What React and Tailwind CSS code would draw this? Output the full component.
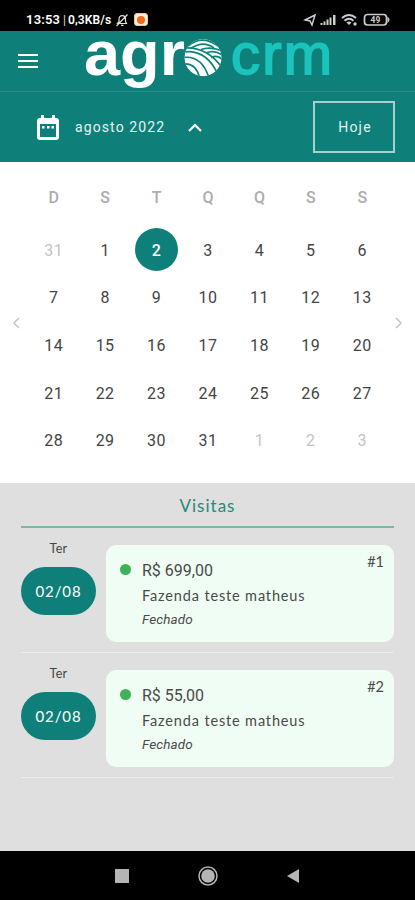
const weekDays = ['D', 'S', 'T', 'Q', 'Q', 'S', 'S'];

const weeks = [
    [31, 1, 2, 3, 4, 5, 6],
    [7, 8, 9, 10, 11, 12, 13],
    [14, 15, 16, 17, 18, 19, 20],
    [21, 22, 23, 24, 25, 26, 27],
    [28, 29, 30, 31, 1, 2, 3],
];

const visits = [
    { id: 1, weekDay: 'Ter', date: '02/08', value: 'R$ 699,00', farm: 'Fazenda teste matheus', status: 'Fechado' },
    { id: 2, weekDay: 'Ter', date: '02/08', value: 'R$ 55,00', farm: 'Fazenda teste matheus', status: 'Fechado' },
];

const StatusBar = () => (
    <div className="flex h-[31px] items-center bg-black pt-[8px] pl-[26px] pr-[24px] text-white">
        <div className="flex w-[86px] items-center whitespace-nowrap font-[Roboto,sans-serif] leading-[16px] font-semibold">
            <span className="w-[37px] text-[13px] tracking-[0.200px]">13:53</span>
            <span className="w-[5px] text-[12px] font-normal text-[#ddd]">|</span>
            <span className="text-[12px] tracking-[0.100px]">0,3KB/s</span>
        </div>
        <svg className="ml-[3px] h-[14px] w-[14px]" viewBox="0 0 14 14" fill="none" stroke="#dedede" strokeWidth="1.2">
            <path d="M2.500 10.500h9l-1-2V6c0-2-1.300-3.300-3.300-3.300S4 4 4 6v2.500zM6 12.300h2.500M1.500 13 12.500 1.500" />
        </svg>
        <div className="ml-[5px] flex h-[13px] w-[14px] items-center justify-center rounded-[3px] border border-[#f7c48c] bg-[#fff1dc]">
            <div className="h-[8px] w-[8px] rounded-full bg-[#f26a1b]" />
        </div>
        <svg className="ml-auto h-[16px] w-[88px]" viewBox="0 0 88 16" fill="none">
            <path d="M2 8 12 3 9 13 7 9z" stroke="#ccc" strokeWidth="1.500" />
            <path d="M17.500 13v-2h2v2zM20.500 13V9.500h2V13zM23.500 13V7.500h2V13zM26.500 13V5.500h2V13zM30 13V3h2.500v10z" fill="#ccc" />
            <path d="M39 6q7-6 14 0M41.500 8.700q4.500-4 9 0" stroke="#ccc" strokeWidth="2" />
            <path d="m46 13-2.500-2.500q2.500-1.800 5 0z" fill="#ccc" />
            <circle cx="52" cy="12" r="1.700" fill="#ccc" />
            <rect x="61.500" y="2.500" width="22" height="10.500" rx="3" stroke="#ccc" strokeWidth="1.700" />
            <path d="M84.500 4.500q4 3.200 0 6.500z" fill="#ccc" />
            <text x="72.500" y="10.800" textAnchor="middle" fill="#ccc" fontFamily="Roboto, sans-serif" fontSize="8.500" fontWeight="700">49</text>
        </svg>
    </div>
);

const Logo = () => (
    <svg className="ml-[46px] h-[61px] w-[250px] overflow-visible" viewBox="0 0 250 61">
        <defs>
            <clipPath id="globe">
                <circle cx="119" cy="26.700" r="18.500" />
            </clipPath>
        </defs>
        <text x="0" y="43.500" textLength="101" lengthAdjust="spacingAndGlyphs" fill="white" fontFamily="Liberation Sans, sans-serif" fontSize="63" fontWeight="700">agr</text>
        <g clipPath="url(#globe)">
            <circle cx="119" cy="26.700" r="19" fill="white" />
            <g fill="none" stroke="#0f8178" strokeWidth="1.700">
                <path d="M99 21Q123 18 134 44M99 26.500Q118 24 125 47M99 33Q112 31 116 48" />
                <path d="M101 17Q124 16 139 38" />
                <path d="M107 17.500Q119 9 130 17M104 15Q118 3 134 15" />
                <path d="M117 18.500Q126 15 139 20M122 22Q130 18 140 25M127 26.500Q134 23 140 30" />
            </g>
        </g>
        <text x="147" y="42.500" textLength="101" lengthAdjust="spacing" fill="#1bc3bd" fontFamily="Liberation Sans, sans-serif" fontSize="58" stroke="#1bc3bd" strokeWidth="1.800">crm</text>
    </svg>
);

const Header = () => (
    <header className="bg-[#0f8079]">
        <div className="flex h-[61px] items-center border-b border-[#258b82] pl-[18px]">
            <button className="flex w-[20px] flex-col gap-[4px]">
                <span className="h-[2px] w-full bg-white" />
                <span className="h-[2px] w-full bg-white" />
                <span className="h-[2px] w-full bg-white" />
            </button>
            <Logo />
        </div>
        <div className="flex h-[70px] items-center pl-[37px] pr-[20px] font-[Roboto,sans-serif] text-[14px] text-[#e4f3f1]">
            <svg className="h-[25px] w-[22px]" viewBox="0 0 22 25" fill="white">
                <path fillRule="evenodd" d="M3 3h1V0h3v3h8V0h3v3h1q3 0 3 3v16q0 3-3 3H3q-3 0-3-3V6q0-3 3-3zm0 6v13h16V9zM5 11h2.500v2.500H5zm5 0h2.500v2.500H10zm4.500 0H17v2.500h-2.500z" />
            </svg>
            <span className="ml-[16px] w-[90px] whitespace-nowrap tracking-[1.100px]">agosto 2022</span>
            <svg className="ml-[23px] h-[9px] w-[14px]" viewBox="0 0 14 9" fill="none" stroke="white" strokeWidth="2.200">
                <path d="m1 8 6-6 6 6" />
            </svg>
            <button className="ml-auto h-[52px] w-[82px] border-2 border-[#a4d2cf] pl-[2px] tracking-[1.200px]">Hoje</button>
        </div>
    </header>
);

const Arrow = ({ d }) => (
    <svg className="h-[12px] w-[8px] shrink-0" viewBox="0 0 8 12" fill="none" stroke="#c4c4c4" strokeWidth="1.500">
        <path d={d} />
    </svg>
);

const Calendar = () => (
    <section className="flex h-[321px] items-center justify-between bg-white px-[12px] font-[Roboto,sans-serif]">
        <Arrow d="M7 1 2 6l5 5" />
        <div className="h-full w-[361px] shrink-0 pl-[1px]">
            <div className="grid h-[64px] grid-cols-7 pt-[7px] text-[16px] font-medium text-[#adadad]">
                {weekDays.map((day, i) => (
                    <div key={i} className="flex items-center justify-center">{day}</div>
                ))}
            </div>
            {weeks.map((week, row) => (
                <div key={row} className="grid h-[47.600px] grid-cols-7 text-[16px] tracking-[0.500px] text-[#444]">
                    {week.map((day) => {
                        const outside = (row === 0 && day > 7) || (row === 4 && day < 7);
                        const selected = row === 0 && day === 2;
                        return (
                            <div key={day} className="flex items-center justify-center">
                                <span
                                    className={`flex h-[43px] w-[43px] shrink-0 items-center justify-center rounded-full pt-[2px] ${selected ? 'bg-[#0f8079] font-medium text-white' : ''} ${outside ? 'text-[#c4c4c4]' : ''}`}
                                >
                                    {day}
                                </span>
                            </div>
                        );
                    })}
                </div>
            ))}
        </div>
        <Arrow d="m1 1 5 5-5 5" />
    </section>
);

const Visit = ({ visit }) => (
    <div className="flex h-[125px] border-b border-[#ececec] pt-[17px]">
        <div className="-mt-[5px] w-[75px] shrink-0 text-center">
            <div className="h-[27px] text-[12.500px] leading-[17px] tracking-[0.300px] text-[#444]">{visit.weekDay}</div>
            <div className="flex h-[48px] items-center justify-center rounded-full bg-[#0f8079] text-[15px] tracking-[0.900px] text-white">
                {visit.date}
            </div>
        </div>
        <div className="ml-[10px] flex h-[97px] flex-1 rounded-[10px] bg-[#f0fdf4] pt-[13px] pl-[14px] pr-[10px] text-[#4a4a4a]">
            <div className="mt-[6px] h-[11px] w-[11px] rounded-full bg-[#3eb258]" />
            <div className="ml-[11px] flex-1">
                <div className="font-[Roboto,sans-serif] text-[16px] leading-[25px]">{visit.value}</div>
                <div className="whitespace-nowrap text-[14.500px] leading-[25px] tracking-[0.850px]">{visit.farm}</div>
                <div className="font-[Roboto,sans-serif] text-[13.500px] leading-[23px] tracking-[0.100px] italic">{visit.status}</div>
            </div>
            <div className="-mt-[6px] text-[14.500px] leading-[20px]">#{visit.id}</div>
        </div>
    </div>
);

const NavBar = () => (
    <nav className="flex h-[49px] items-center bg-black pl-[115px]">
        <div className="h-[14px] w-[14px] bg-[#b5b5b5]" />
        <svg className="ml-[69px] h-[20px] w-[20px]" viewBox="0 0 20 20">
            <circle cx="10" cy="10" r="9" fill="none" stroke="#b5b5b5" strokeWidth="1.500" />
            <circle cx="10" cy="10" r="6.800" fill="#b5b5b5" />
        </svg>
        <svg className="ml-[69px] h-[14px] w-[12px]" viewBox="0 0 12 14" fill="#b5b5b5">
            <path d="M12 0v14L0 7z" />
        </svg>
    </nav>
);

const App = () => (
    <div className="flex h-[900px] w-full max-w-[415px] flex-col overflow-hidden bg-[#dfdfdf]">
        <StatusBar />
        <Header />
        <Calendar />
        <main className="flex-1 px-[21px] font-[Lato,sans-serif]">
            <h2 className="h-[45px] border-b-2 border-[#7cb8aa] pt-[11px] text-center text-[17px] leading-[24px] tracking-[1px] text-[#27897a]">
                Visitas
            </h2>
            {visits.map((visit) => (
                <Visit key={visit.id} visit={visit} />
            ))}
        </main>
        <NavBar />
    </div>
);

export default App;
